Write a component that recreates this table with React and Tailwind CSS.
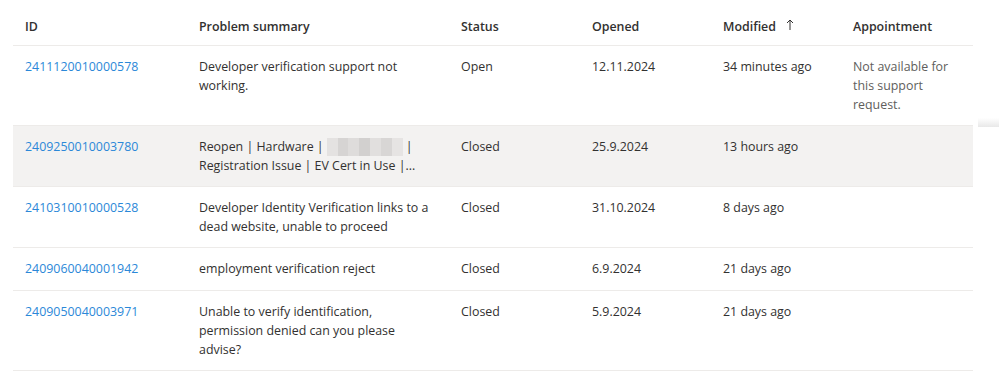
import React from 'react';

const rows = [
  {
    id: '2411120010000578',
    summary: 'Developer verification support not working.',
    status: 'Open',
    opened: '12.11.2024',
    modified: '34 minutes ago',
    appointment: 'Not available for this support request.'
  },
  {
    id: '2409250010003780',
    summary: 'redacted',
    status: 'Closed',
    opened: '25.9.2024',
    modified: '13 hours ago',
    highlight: true
  },
  {
    id: '2410310010000528',
    summary: 'Developer Identity Verification links to a dead website, unable to proceed',
    status: 'Closed',
    opened: '31.10.2024',
    modified: '8 days ago'
  },
  {
    id: '2409060040001942',
    summary: 'employment verification reject',
    status: 'Closed',
    opened: '6.9.2024',
    modified: '21 days ago'
  },
  {
    id: '2409050040003971',
    summary: 'Unable to verify identification, permission denied can you please advise?',
    status: 'Closed',
    opened: '5.9.2024',
    modified: '21 days ago'
  }
];

const cols = 'grid grid-cols-[174px_262px_131px_131px_130px_132px]';

// blurred-out bit of the summary
const Redacted = () => <span className="inline-flex align-middle w-[76px] h-[18px] mx-[3px] -mt-[2px] overflow-hidden">
    <span className="flex-1 bg-[#e4e2e1]" />
    <span className="flex-1 bg-[#d6d4d3]" />
    <span className="flex-1 bg-[#dedcdb]" />
    <span className="flex-1 bg-[#d2d0cf]" />
    <span className="flex-1 bg-[#e1dfde]" />
    <span className="flex-1 bg-[#d8d6d5]" />
    <span className="flex-1 bg-[#e6e4e3]" />
  </span>;

const Row = ({ row }) => <div className={`${cols} min-h-[43px] border-b border-[#edebe9] ${row.highlight ? 'bg-[#f3f2f1]' : 'bg-white'}`}>
    <div className="pl-3 pr-3 pt-[11px] pb-[11px]">
      <a className="text-[#2b88d8] cursor-pointer">{row.id}</a>
    </div>
    <div className="pl-3 pr-4 pt-[11px] pb-[11px]">
      {row.summary === 'redacted' ? <span>
          Reopen | Hardware |<Redacted />|<br />Registration Issue | EV Cert in Use |...
        </span> : row.summary}
    </div>
    <div className="pl-3 pt-[11px] pb-[11px]">{row.status}</div>
    <div className="pl-3 pt-[11px] pb-[11px]">{row.opened}</div>
    <div className="pl-3 pt-[11px] pb-[11px]">{row.modified}</div>
    <div className="pl-3 pr-3 pt-[11px] pb-[11px] text-[#605e5c]">{row.appointment}</div>
  </div>;

const App = () => {
  return <div className="relative w-[999px] h-[375px] bg-white overflow-hidden text-[12.4px] leading-[19px] text-[#323130]" style={{ fontFamily: '"Open Sans", "Noto Sans", sans-serif' }}>
      <div className="ml-[13px] w-[960px]">
        <div className={`${cols} h-[46px] pt-[17px] border-b border-[#edebe9] font-semibold`}>
          <div className="pl-3">ID</div>
          <div className="pl-3">Problem summary</div>
          <div className="pl-3">Status</div>
          <div className="pl-3">Opened</div>
          <div className="pl-3 flex items-center gap-[10px] h-[19px]">
            <span>Modified</span>
            <svg width="8" height="12" viewBox="0 0 8 12" className="-mt-[4px]">
              <path d="M4 11V1M1 4l3-3 3 3" fill="none" stroke="#323130" strokeWidth="1" />
            </svg>
          </div>
          <div className="pl-3">Appointment</div>
        </div>
        {rows.map(r => <Row key={r.id} row={r} />)}
      </div>
      <div className="absolute left-[978px] top-[118px] w-[21px] h-[9px] bg-gradient-to-b from-white to-[#e8e8e8]" />
    </div>;
};

export default App;
